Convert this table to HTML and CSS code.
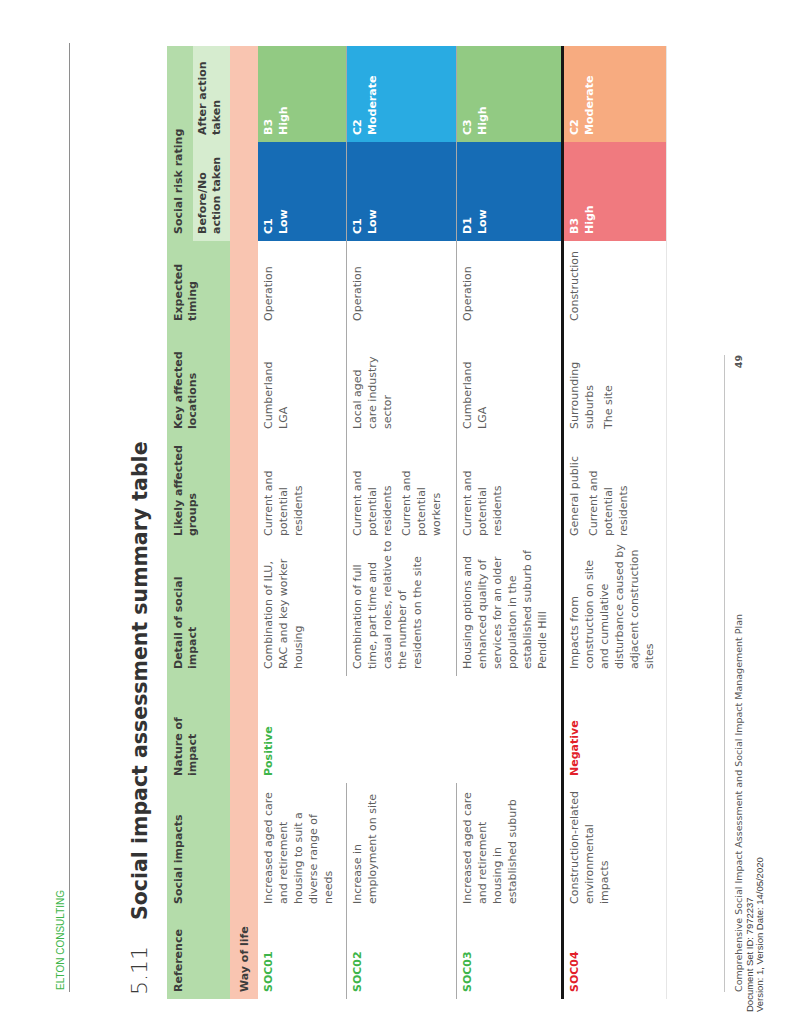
FILE: index.html
```html
<!DOCTYPE html>
<html lang="en">
<head>
<meta charset="utf-8">
<title>Social impact assessment summary table</title>
<link rel="stylesheet" href="styles.css">
</head>
<body>
<div class="page">
  <header class="brand-bar"><span class="brand">ELTON CONSULTING</span></header>

  <h1 class="title"><span class="num">5.11</span><span class="name">Social impact assessment summary table</span></h1>

  <table class="sia">
    <colgroup>
      <col class="c-ref"><col class="c-impact"><col class="c-nature"><col class="c-detail"><col class="c-groups"><col class="c-loc"><col class="c-timing"><col class="c-before"><col class="c-after">
    </colgroup>
    <thead>
      <tr class="h1row">
        <th rowspan="2">Reference</th>
        <th rowspan="2">Social impacts</th>
        <th rowspan="2">Nature of<br>impact</th>
        <th rowspan="2">Detail of social<br>impact</th>
        <th rowspan="2">Likely affected<br>groups</th>
        <th rowspan="2">Key affected<br>locations</th>
        <th rowspan="2">Expected<br>timing</th>
        <th colspan="2">Social risk rating</th>
      </tr>
      <tr class="h2row">
        <th class="sub">Before/No<br>action taken</th>
        <th class="sub">After action<br>taken</th>
      </tr>
    </thead>
    <tbody>
      <tr class="section"><td colspan="9">Way of life</td></tr>
      <tr class="r1">
        <td class="pos">SOC01</td>
        <td>Increased aged care<br>and retirement<br>housing to suit a<br>diverse range of<br>needs</td>
        <td rowspan="3" class="pos">Positive</td>
        <td>Combination of ILU,<br>RAC and key worker<br>housing</td>
        <td>Current and<br>potential<br>residents</td>
        <td>Cumberland<br>LGA</td>
        <td>Operation</td>
        <td class="risk low">C1<br>Low</td>
        <td class="risk high-g">B3<br>High</td>
      </tr>
      <tr class="r2">
        <td class="pos">SOC02</td>
        <td>Increase in<br>employment on site</td>
        <td>Combination of full<br>time, part time and<br>casual roles, relative to<br>the number of<br>residents on the site</td>
        <td><p class="para">Current and<br>potential<br>residents</p><p class="para">Current and<br>potential<br>workers</p></td>
        <td>Local aged<br>care industry<br>sector</td>
        <td>Operation</td>
        <td class="risk low">C1<br>Low</td>
        <td class="risk mod-b">C2<br>Moderate</td>
      </tr>
      <tr class="r3">
        <td class="pos">SOC03</td>
        <td>Increased aged care<br>and retirement<br>housing in<br>established suburb</td>
        <td>Housing options and<br>enhanced quality of<br>services for an older<br>population in the<br>established suburb of<br>Pendle Hill</td>
        <td>Current and<br>potential<br>residents</td>
        <td>Cumberland<br>LGA</td>
        <td>Operation</td>
        <td class="risk low">D1<br>Low</td>
        <td class="risk high-g">C3<br>High</td>
      </tr>
      <tr class="r4">
        <td class="neg">SOC04</td>
        <td>Construction-related<br>environmental<br>impacts</td>
        <td class="neg">Negative</td>
        <td>Impacts from<br>construction on site<br>and cumulative<br>disturbance caused by<br>adjacent construction<br>sites</td>
        <td><p class="para">General public</p><p class="para">Current and<br>potential<br>residents</p></td>
        <td><p class="para">Surrounding<br>suburbs</p><p class="para">The site</p></td>
        <td>Construction</td>
        <td class="risk high-r">B3<br>High</td>
        <td class="risk mod-o">C2<br>Moderate</td>
      </tr>
    </tbody>
  </table>

  <footer class="footer">
    <div class="foot-row">
      <span class="foot-title">Comprehensive Social Impact Assessment and Social Impact Management Plan</span>
      <span class="page-no">49</span>
    </div>
    <div class="stamp">Document Set ID: 7972237<br>Version: 1, Version Date: 14/05/2020</div>
  </footer>
</div>
</body>
</html>
```

FILE: styles.css
```css
html {
  overflow: hidden;
  background: #ffffff;
}
body {
  margin: 0;
  padding: 0;
  width: 796px;
  height: 1036px;
  overflow: hidden;
}

.page {
  width: 1036px;
  height: 796px;
  box-sizing: border-box;
  padding: 0 0 31px 44px;
  display: flex;
  flex-direction: column;
  align-items: flex-start;
  transform-origin: 0 0;
  transform: translateY(1036px) rotate(-90deg);
  font-family: "DejaVu Sans", Verdana, sans-serif;
  color: #5e5e5e;
}

/* top brand bar */
.brand-bar {
  width: 949px;
  padding-top: 53px;
  border-bottom: 1px solid #8e8e8e;
}
.brand {
  display: block;
  padding-left: 2px;
  font-family: "Liberation Sans", Arial, sans-serif;
  font-size: 10px;
  line-height: 16px;
  color: #3db54a;
}

/* section title */
.title {
  display: flex;
  margin: 58px 0 0 -3px;
  font-size: 20.5px;
  line-height: 24px;
  font-weight: normal;
}
.title .num {
  width: 75px;
  font-size: 22px;
  font-weight: 300;
  color: #3a3a3a;
}
.title .name {
  font-weight: bold;
  color: #333333;
}

/* table */
.sia {
  width: 953px;
  margin: 15px 0 0 -7px;
  border-collapse: collapse;
  table-layout: fixed;
  font-size: 11px;
}
.c-ref { width: 88px; }
.c-impact { width: 128px; }
.c-nature { width: 107px; }
.c-detail { width: 133px; }
.c-groups { width: 107px; }
.c-loc { width: 108px; }
.c-timing { width: 87px; }
.c-before { width: 99px; }
.c-after { width: 96px; }

.sia th {
  background: #b4dcaa;
  color: #3c3c3c;
  font-weight: bold;
  font-size: 11px;
  line-height: 14px;
  text-align: left;
  vertical-align: top;
  padding: 5px 6px 0 7px;
  white-space: nowrap;
}
.h1row { height: 26px; }
.h2row { height: 37px; }
.sia th.sub {
  background: #d6eccf;
  padding-top: 3px;
}

.sia td {
  vertical-align: top;
  padding: 3px 7px 0;
  line-height: 15px;
  white-space: nowrap;
}
.sia .section td {
  background: #f9c5b1;
  color: #3c3c3c;
  font-weight: bold;
  line-height: 14px;
  padding: 8px 7px 6px;
}
.section { height: 28px; }

.r2 td, .r3 td {
  border-top: 1px solid #a9a9a9;
}
.r1 { height: 88px; }
.r2 { height: 110px; }
.r3 { height: 106px; }
.r4 { height: 104px; }
.r4 td {
  border-top: 3px solid #161616;
  border-bottom: 1px solid #e6e6e6;
}

.para { margin: 0; }
.para + .para { margin-top: 4px; }

.pos { color: #3db54a; font-weight: bold; }
.neg { color: #e2202a; font-weight: bold; }

.sia td.risk {
  color: #ffffff;
  font-weight: bold;
}
.low { background: #166cb5; }
.high-g { background: #92ca83; }
.mod-b { background: #29abe2; }
.high-r { background: #f07a7f; }
.mod-o { background: #f7ab80; }

/* footer */
.footer {
  margin-top: auto;
  width: 637px;
  border-top: 1px solid #c4c4c4;
}
.foot-row {
  display: flex;
  justify-content: space-between;
  padding-top: 7px;
  font-size: 9.5px;
  line-height: 13px;
}
.foot-title { color: #555555; }
.page-no { font-weight: bold; color: #555555; }
.stamp {
  margin-left: -20px;
  font-family: "Liberation Sans", Arial, sans-serif;
  font-size: 9.5px;
  line-height: 10px;
  color: #3a3a3a;
}
```
